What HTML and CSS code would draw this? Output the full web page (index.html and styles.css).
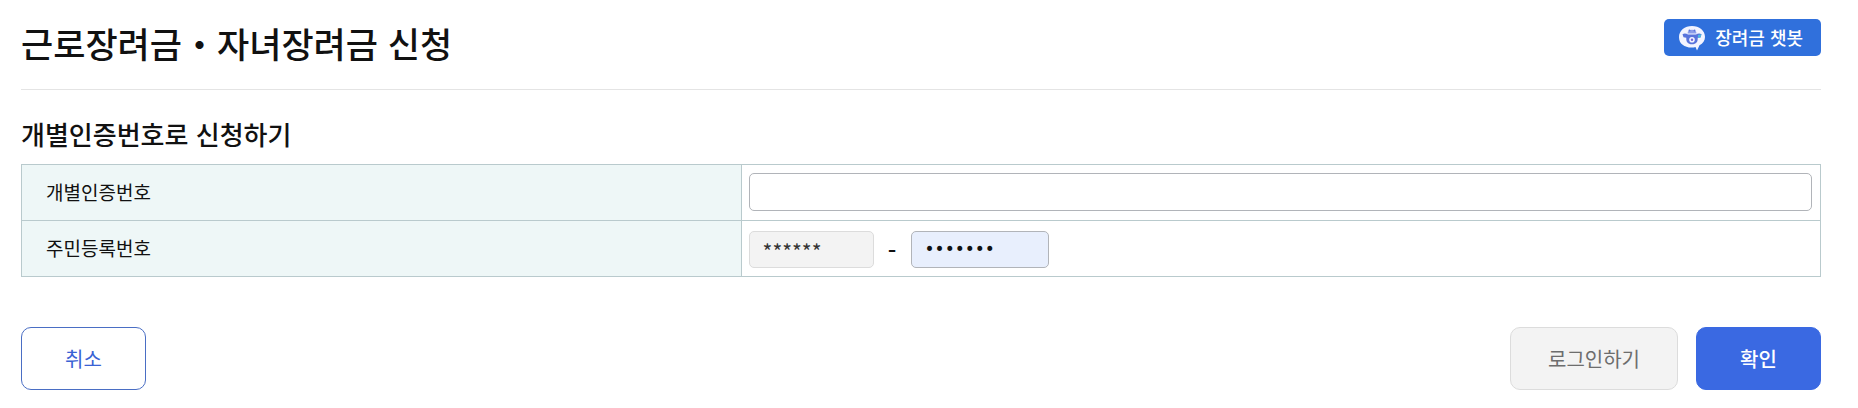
FILE: index.html
```html
<!DOCTYPE html>
<html lang="ko">
<head>
    <meta charset="UTF-8">
    <meta name="viewport" content="width=device-width, initial-scale=1.0">
    <title>근로장려금・자녀장려금 신청</title>
    <link rel="stylesheet" href="styles.css">
</head>
<body>
    <div class="header">
        <h1>근로장려금・자녀장려금 신청</h1>
        <button type="button" class="chatbot-btn">
            <svg class="chatbot-icon" viewBox="0 0 26 26" aria-hidden="true">
                <path d="M13 1C5.800 1 0 5.600 0 12.200S5.600 22.500 12.500 22.500c1.500 0 2.800-.1 4-.5L18 25.500l2.500-5.200C24 18.300 26 15.600 26 12 26 5.600 20.200 1 13 1z" fill="#f3f4ff"/>
                <path d="M3.500 9.200c2-1.200 4-.6 5.500.3h8c1.500-.9 3.500-1.500 5.500-.3l-1 3.300-2.800.3c.3 4.200-1.500 6.500-5.700 6.500s-6-2.300-5.700-6.500l-2.800-.6z" fill="#5873dc"/>
                <path d="M8.500 8.500c0-5 9-5 9 0z" fill="#8c9de9"/>
                <path d="M19 10l3.500-.8-1 3.300-2.500.3z" fill="#4ebbe0"/>
                <circle cx="10.500" cy="5.500" r="1" fill="#5873dc"/>
                <circle cx="15.500" cy="5.500" r="1" fill="#5873dc"/>
                <circle cx="13" cy="14.800" r="2.800" fill="#f3f4ff"/>
                <circle cx="13" cy="14.800" r="1.200" fill="#7565d5"/>
            </svg>
            <span>장려금 챗봇</span>
        </button>
    </div>

    <h2>개별인증번호로 신청하기</h2>
    <form>
        <table class="form-table">
            <tr>
                <th scope="row"><label for="certNo">개별인증번호</label></th>
                <td><input type="text" id="certNo" class="input-full"></td>
            </tr>
            <tr>
                <th scope="row"><label for="juminFront">주민등록번호</label></th>
                <td>
                    <div class="jumin">
                        <input type="text" id="juminFront" class="input-front" value="******" disabled>
                        <span>-</span>
                        <input type="password" class="input-back" value="0000000" aria-label="주민등록번호 뒷자리">
                    </div>
                </td>
            </tr>
        </table>

        <div class="btn-area">
            <button type="button" class="btn btn-cancel">취소</button>
            <div class="btn-right">
                <button type="button" class="btn btn-login">로그인하기</button>
                <button type="button" class="btn btn-confirm">확인</button>
            </div>
        </div>
    </form>
</body>
</html>
```
FILE: styles.css
```css
* { margin: 0; padding: 0; box-sizing: border-box; }
body {
    font-family: 'Noto Sans CJK KR', sans-serif;
    font-size: 19px;
    color: #111;
    background: #fff;
    padding: 0 37px 0 21px;
}
.header {
    display: flex;
    justify-content: space-between;
    align-items: flex-start;
    padding: 18px 0 22px;
    border-bottom: 1px solid #e4e4e4;
}
h1 {
    font-size: 35px;
    font-weight: 500;
    line-height: 49px;
}
.chatbot-btn {
    display: flex;
    align-items: center;
    gap: 10px;
    height: 37px;
    margin-top: 1px;
    padding: 0 18px 0 15px;
    border: none;
    border-radius: 5px;
    background: #3070dc;
    color: #fff;
    font-family: inherit;
    font-size: 18px;
    font-weight: 500;
    cursor: pointer;
}
.chatbot-btn span { padding-bottom: 2px; }
.chatbot-icon { width: 26px; height: 26px; }
h2 {
    font-size: 26px;
    font-weight: 500;
    line-height: 38px;
    margin: 25px 0 11px;
}
.form-table {
    width: 100%;
    border-collapse: collapse;
    table-layout: fixed;
}
.form-table th, .form-table td {
    height: 56px;
    border: 1px solid #b9cacd;
}
.form-table th {
    width: 40%;
    padding: 0 24px 2px;
    background: #eef7f7;
    font-weight: 400;
    text-align: left;
}
.form-table td { padding: 0 8px 1px 7px; }
input {
    display: block;
    height: 38px;
    padding: 0 13px;
    border: 1px solid #b1b4b9;
    border-radius: 5px;
    background: #fff;
    color: #111;
    font-family: inherit;
    font-size: 19px;
}
.input-full { width: 100%; }
.jumin { display: flex; align-items: center; padding-top: 2px; }
.jumin input { height: 37px; }
.jumin span {
    width: 37px;
    font-size: 24px;
    font-weight: 500;
    line-height: 37px;
    text-align: center;
}
.input-front {
    width: 125px;
    padding-top: 3px;
    border-color: #dcdcdc;
    background: #f3f3f3;
    color: #333;
    font-size: 21px;
}
.input-back {
    width: 138px;
    background: #e8effd;
    font-family: 'DejaVu Sans', sans-serif;
    font-size: 17px;
}
.btn-area {
    display: flex;
    justify-content: space-between;
    margin-top: 50px;
}
.btn-right { display: flex; gap: 18px; }
.btn {
    min-width: 125px;
    height: 63px;
    padding: 0 37px;
    border: 1px solid #3a69e2;
    border-radius: 10px;
    background: #fff;
    font-family: inherit;
    font-size: 20px;
    cursor: pointer;
}
.btn-cancel { color: #3a62d4; border-color: #4a6ec4; }
.btn-login {
    border-color: #dcdcdc;
    background: #f3f3f3;
    color: #6d6d6d;
}
.btn-confirm {
    background: #3a69e2;
    color: #fff;
    font-weight: 500;
}
```
